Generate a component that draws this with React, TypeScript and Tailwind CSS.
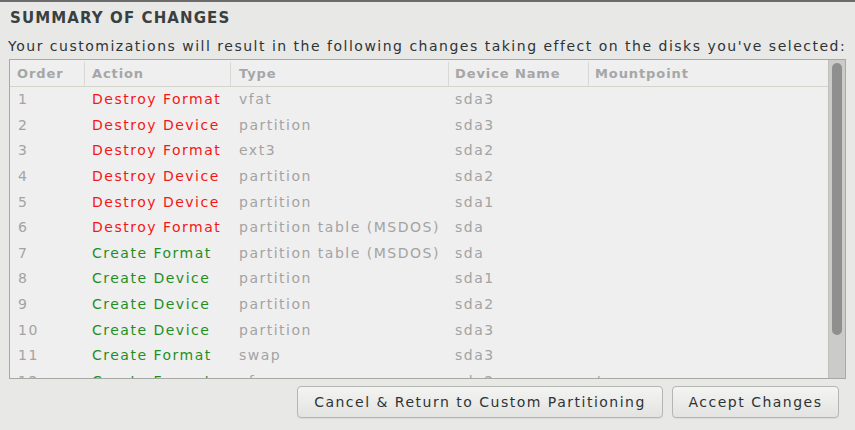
import React from 'react';

type Row = { n: number; action: string; create: boolean; type: string; dev: string; mount?: string };

const rows: Row[] = [
  { n: 1, action: 'Destroy Format', create: false, type: 'vfat', dev: 'sda3' },
  { n: 2, action: 'Destroy Device', create: false, type: 'partition', dev: 'sda3' },
  { n: 3, action: 'Destroy Format', create: false, type: 'ext3', dev: 'sda2' },
  { n: 4, action: 'Destroy Device', create: false, type: 'partition', dev: 'sda2' },
  { n: 5, action: 'Destroy Device', create: false, type: 'partition', dev: 'sda1' },
  { n: 6, action: 'Destroy Format', create: false, type: 'partition table (MSDOS)', dev: 'sda' },
  { n: 7, action: 'Create Format', create: true, type: 'partition table (MSDOS)', dev: 'sda' },
  { n: 8, action: 'Create Device', create: true, type: 'partition', dev: 'sda1' },
  { n: 9, action: 'Create Device', create: true, type: 'partition', dev: 'sda2' },
  { n: 10, action: 'Create Device', create: true, type: 'partition', dev: 'sda3' },
  { n: 11, action: 'Create Format', create: true, type: 'swap', dev: 'sda3' },
  { n: 12, action: 'Create Format', create: true, type: 'xfs', dev: 'sda2', mount: '/' },
  { n: 13, action: 'Create Format', create: true, type: 'ext4', dev: 'sda1', mount: '/boot' },
];

export default function App() {
  return (
    <div
      className="w-[855px] h-[430px] overflow-hidden bg-[#e8e8e7] border-t-2 border-[#6b6b6b] text-[14px] tracking-[1.5px] text-[#2e3436] flex flex-col"
      style={{ fontFamily: '"DejaVu Sans", sans-serif' }}
    >
      <div className="pl-[10px] pt-[8px] text-[15px] font-bold tracking-[1.1px] leading-[17px] text-[#3a3f40]">SUMMARY OF CHANGES</div>
      <div className="pl-[8px] pt-[11px] leading-[17px] whitespace-nowrap">
        Your customizations will result in the following changes taking effect on the disks you've selected:
      </div>
      <div className="ml-[9px] mt-[4px] w-[837px] h-[320px] border border-[#a7aaa4] bg-[#efefef] flex overflow-hidden">
        <div className="flex-1 overflow-hidden">
          <div className="flex h-[27px] items-center pt-[2px] border-b border-[#d3d5cd] font-bold text-[13px] tracking-[0.9px] text-[#a6a6a6]">
            <div className="w-[75px] pl-[7px] h-full flex items-center border-r border-[#d8d8d4]">Order</div>
            <div className="w-[146px] pl-[7px] h-full flex items-center border-r border-[#d8d8d4]">Action</div>
            <div className="w-[218px] pl-[8px] h-full flex items-center border-r border-[#d8d8d4]">Type</div>
            <div className="w-[140px] pl-[6px] h-full flex items-center border-r border-[#d8d8d4]">Device Name</div>
            <div className="flex-1 pl-[6px]">Mountpoint</div>
          </div>
          {rows.map((r) => (
            <div key={r.n} className="flex h-[25.6px] items-center text-[#a3a3a3] whitespace-nowrap">
              <div className="w-[75px] pl-[8px]">{r.n}</div>
              <div className={`w-[146px] pl-[7px] ${r.create ? 'text-[#1f8e1f]' : 'text-[#f51616]'}`}>{r.action}</div>
              <div className="w-[218px] pl-[8px]">{r.type}</div>
              <div className="w-[140px] pl-[6px]">{r.dev}</div>
              <div className="flex-1 pl-[6px]">{r.mount ?? ''}</div>
            </div>
          ))}
        </div>
        <div className="w-[17px] bg-[#cbcbc9] border-l border-[#c0c0bd] pt-[3px] flex justify-center">
          <div className="w-[10px] h-[272px] rounded-full bg-[#8f8f8f]" />
        </div>
      </div>
      <div className="flex justify-end gap-[9px] pr-[16px] pt-[7px]">
        <button className="w-[366px] h-[32px] rounded-[4px] border border-[#b4b6b0] bg-gradient-to-b from-[#f4f4f3] to-[#e3e3e1] text-[#2e3436] shadow-[0_1px_0_rgba(0,0,0,0.05)]">
          Cancel &amp; Return to Custom Partitioning
        </button>
        <button className="w-[167px] h-[32px] rounded-[4px] border border-[#b4b6b0] bg-gradient-to-b from-[#f4f4f3] to-[#e3e3e1] text-[#2e3436] shadow-[0_1px_0_rgba(0,0,0,0.05)]">
          Accept Changes
        </button>
      </div>
    </div>
  );
}
